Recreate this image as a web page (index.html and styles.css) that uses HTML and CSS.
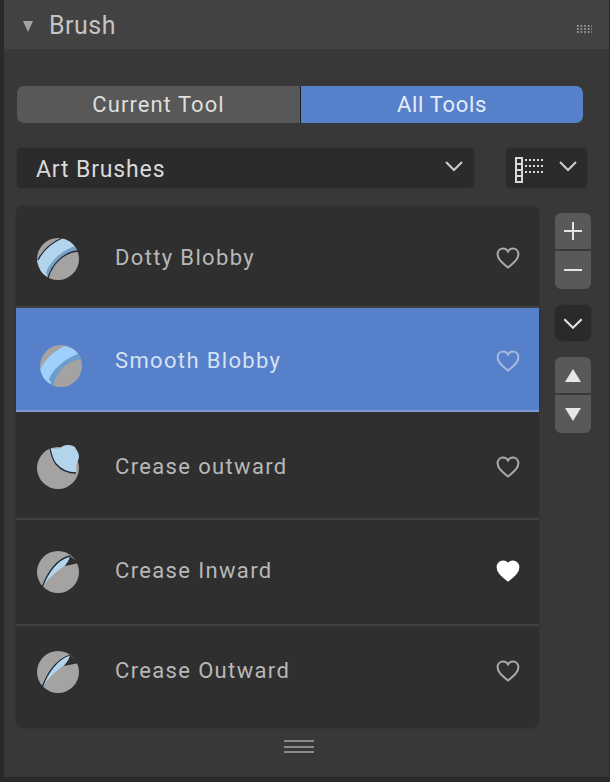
FILE: index.html
```html
<!DOCTYPE html>
<html lang="en">
<head>
<meta charset="utf-8">
<title>Brush</title>
<link rel="stylesheet" href="styles.css">
</head>
<body>
<svg class="defs" width="0" height="0" aria-hidden="true">
  <defs>
    <symbol id="heart" viewBox="0 0 24 22"><path d="M12 20.5C6 15.6 1.6 12.2 1.6 7.3 1.6 4 4 1.6 7 1.6c2 0 3.9 1 5 2.9 1.1-1.9 3-2.9 5-2.9 3 0 5.4 2.4 5.4 5.7 0 4.9-4.4 8.3-10.4 13.2z"/></symbol>
    <symbol id="chev" viewBox="0 0 18 12"><path d="M1 2l8 8 8-8" fill="none" stroke="currentColor" stroke-width="2"/></symbol>
    <clipPath id="ball"><circle cx="21" cy="23" r="21"/></clipPath>
  </defs>
</svg>
<main class="panel">
  <header class="head">
    <span class="tri"></span>
    <h1 class="title">Brush</h1>
    <svg class="grip" width="15" height="8" viewBox="0 0 15 8"><path d="M0 1h15M0 4h15M0 7h15" stroke="#b5b5b5" stroke-width="1.4" stroke-dasharray="1.6 2"/></svg>
  </header>
  <div class="body">
    <div class="tabs">
      <button class="tab">Current Tool</button>
      <button class="tab tab-on">All Tools</button>
    </div>
    <div class="selects">
      <div class="select select-main"><span>Art Brushes</span><svg class="chev"><use href="#chev"/></svg></div>
      <div class="select select-view">
        <svg class="viewicon" width="29" height="26" viewBox="0 0 29 26">
          <path d="M1 1h6v24H1zM1 7h6M1 13h6M1 19h6" fill="none" stroke="#d8d8d8" stroke-width="2"/>
          <path d="M10 3h18M10 9h18M10 15h18" stroke="#d8d8d8" stroke-width="2" stroke-dasharray="2 2"/>
        </svg>
        <svg class="chev"><use href="#chev"/></svg>
      </div>
    </div>
    <div class="main">
      <section class="list">
        <div class="row row-a">
          <svg class="brush" viewBox="0 0 42 44"><circle class="grey" cx="21" cy="23" r="21"/><g clip-path="url(#ball)"><path class="blue" d="M0 25C5 15 14 7 25 2l16 7v6C28 16 16 27 11 42L5 38z"/><path class="mid" d="M9 36C14 24 26 13 41 9l1 6C28 16 16 27 11 42z"/></g><path class="line" d="M11 42C15 28 27 16 41 15M1 24C6 14 14 7 25 2"/></svg>
          <span class="name">Dotty Blobby</span>
          <svg class="heart"><use href="#heart"/></svg>
        </div>
        <div class="row row-b row-on">
          <svg class="brush" viewBox="0 0 42 44"><circle class="grey" cx="21" cy="23" r="21"/><g clip-path="url(#ball)"><path class="bright" d="M0 27C5 16 14 8 25 3l14 5 3 7C28 16 16 27 11 42L4 38z"/><path class="mid2" d="M9 36C14 25 26 14 42 10l1 6C28 17 16 28 13 44z"/></g></svg>
          <span class="name">Smooth Blobby</span>
          <svg class="heart"><use href="#heart"/></svg>
        </div>
        <div class="row row-c">
          <svg class="brush" viewBox="0 0 42 44"><circle class="grey" cx="21" cy="23" r="21"/><path class="blue" d="M13 3c4 1 7 1 10 0 3-2 4-3 7-3 5 0 8 1 9 4 2 3 3 5 3 8 0 3-3 6-3 10 0 2 1 4 0 6-8 0-15-3-20-9-3-4-5-10-6-16z"/><path class="line" d="M13 3c1 6 3 12 6 16 5 6 12 9 20 9"/></svg>
          <span class="name">Crease outward</span>
          <svg class="heart"><use href="#heart"/></svg>
        </div>
        <div class="row row-d">
          <svg class="brush" viewBox="0 0 42 44"><circle class="grey" cx="21" cy="23" r="21"/><path class="wedge" d="M33 7l9 7-14 3z"/><path class="blue" d="M5 39C10 24 20 10 33 7c-1 4-3 8-7 11C19 23 11 29 5 39z"/><path class="line" d="M5 39C10 24 20 10 33 7"/></svg>
          <span class="name">Crease Inward</span>
          <svg class="heart heart-full"><use href="#heart"/></svg>
        </div>
        <div class="row row-e">
          <svg class="brush" viewBox="0 0 42 44"><circle class="grey" cx="21" cy="23" r="21"/><path class="wedge" d="M33 6l9 8-15 3z"/><path class="blue" d="M5 39C10 24 20 9 33 6c-1 4-3 8-7 11C19 22 11 29 5 39z"/><path class="line" d="M5 39C10 24 20 10 33 6"/></svg>
          <span class="name">Crease Outward</span>
          <svg class="heart"><use href="#heart"/></svg>
        </div>
      </section>
      <aside class="side">
        <div class="stack">
          <button class="btn btn-top"><svg width="18" height="18" viewBox="0 0 18 18"><path d="M9 0v18M0 9h18" stroke="#e4e4e4" stroke-width="2"/></svg></button>
          <button class="btn btn-bottom"><svg width="18" height="18" viewBox="0 0 18 18"><path d="M0 9h18" stroke="#e4e4e4" stroke-width="2"/></svg></button>
        </div>
        <button class="btn btn-dark"><svg class="chev chev-light"><use href="#chev"/></svg></button>
        <div class="stack">
          <button class="btn btn-top"><span class="arrow arrow-up"></span></button>
          <button class="btn btn-bottom"><span class="arrow arrow-down"></span></button>
        </div>
      </aside>
    </div>
    <div class="resize"></div>
  </div>
</main>
</body>
</html>
```
FILE: styles.css
```css
* { box-sizing: border-box; }
html, body { margin: 0; height: 782px; overflow: hidden; }
body { background: #2a2a2a; padding: 0 1px 5px 4px; font-family: Roboto, "Liberation Sans", sans-serif; }
.defs { display: block; height: 0; }
.panel { height: 777px; background: #383838; display: flex; flex-direction: column; }
.head { height: 49px; background: #424242; display: flex; align-items: center; padding: 0 17px 0 19px; flex: none; }
.tri { width: 0; height: 0; margin-top: 3px; border-left: 5.5px solid transparent; border-right: 5.5px solid transparent; border-top: 11px solid #a3a3a3; }
.title { margin: 0 0 0 16px; font-size: 25px; font-weight: 400; color: #c4c4c4; letter-spacing: 0.5px; flex: 1; position: relative; top: 1px; }
.grip { margin-top: 8px; }
.body { flex: 1; display: flex; flex-direction: column; padding: 37px 0 0 12px; }
.tabs { display: flex; width: 566px; margin-left: 1px; height: 37px; gap: 1px; }
.tab { border: 0; padding: 0; font: 400 22px Roboto, sans-serif; letter-spacing: 1.05px; color: #dfdfdf; background: #585858; border-radius: 7px 0 0 7px; width: 283px; box-shadow: 1px 0 0 #222; }
.tab-on { flex: 1; width: auto; letter-spacing: 0.7px; background: #5680c9; color: #e4ecfa; border-radius: 0 7px 7px 0; box-shadow: none; }
.selects { display: flex; margin: 25px 0 0 1px; gap: 32px; }
.select { height: 40px; background: #2b2b2b; border-radius: 5px; color: #d6d6d6; display: flex; align-items: center; justify-content: space-between; box-shadow: 0 0 0 1px #333; }
.select-main { width: 457px; padding: 0 11px 0 19px; font-size: 23px; letter-spacing: 0.85px; color: #dadada; }
.select-view { width: 81px; padding: 0 10px 0 9px; }
.chev { width: 18px; height: 12px; color: #cdcdcd; margin-top: -5px; }
.viewicon { margin-top: 3px; }
.select-main span { padding-top: 2px; }
.main { display: flex; margin-top: 18px; }
.list { width: 523px; height: 522px; background: #2f2f2f; border-radius: 7px; overflow: hidden; box-shadow: 0 0 0 1px #333; }
.row { display: flex; align-items: center; padding: 0 19px 0 21px; border-bottom: 2px solid #414141; }
.row-a { height: 102px; padding-top: 3px; }
.row-b { height: 104px; padding-top: 1px; border-bottom: 0; }
.row-c { height: 108px; border-top: 1px solid #2f2f2f; padding-top: 2px; }
.row-d { height: 106px; padding-bottom: 3px; }
.row-e { height: 102px; padding-bottom: 13px; border-bottom: 0; }
.row-on { background: #5680c9; box-shadow: inset 0 -2px 0 #7d9ad4; }
.row-b .brush { margin-left: 3px; margin-right: 33px; margin-top: 8px; }
.brush { width: 42px; height: 44px; margin-right: 36px; flex: none; }
.grey { fill: #a5a3a2; }
.blue { fill: #b2d4ed; }
.mid { fill: #7aa2c8; }
.mid2 { fill: #6d9ccf; }
.bright { fill: #9fd0fb; }
.wedge { fill: #2f2f2f; }
.line { fill: none; stroke: #1e2b38; stroke-width: 1.3; }
.name { flex: 1; font-size: 22px; letter-spacing: 1.35px; color: #b8b8b8; }
.row-on .name { color: #d5e0f5; }
.heart { width: 24px; height: 22px; fill: none; stroke: #aaa; stroke-width: 2; flex: none; }
.row-on .heart { stroke: #a7b9da; }
.heart-full { fill: #fff; stroke: #fff; }
.side { margin-left: 16px; width: 36px; display: flex; flex-direction: column; padding-top: 7px; gap: 16px; }
.stack { display: flex; flex-direction: column; gap: 2px; }
.btn { width: 36px; height: 36px; padding: 0; border: 0; background: #595959; display: flex; align-items: center; justify-content: center; }
.btn-top { border-radius: 6px 6px 0 0; }
.btn-bottom { border-radius: 0 0 6px 6px; height: 38px; }
.btn-dark { background: #2a2a2a; border-radius: 7px; box-shadow: 0 0 0 1px #333; }
.chev-light { width: 20px; height: 13px; color: #e0e0e0; margin: 0; }
.arrow { width: 0; height: 0; border-left: 8px solid transparent; border-right: 8px solid transparent; }
.arrow-up { border-bottom: 13px solid #e6e6e6; }
.arrow-down { border-top: 13px solid #e6e6e6; }
.resize { margin: 12px 0 0 268px; width: 30px; height: 13px; border-top: 2px solid #8a8a8a; border-bottom: 2px solid #8a8a8a; position: relative; }
.resize::after { content: ""; position: absolute; left: 0; right: 0; top: 3.5px; height: 2px; background: #8a8a8a; }
```
